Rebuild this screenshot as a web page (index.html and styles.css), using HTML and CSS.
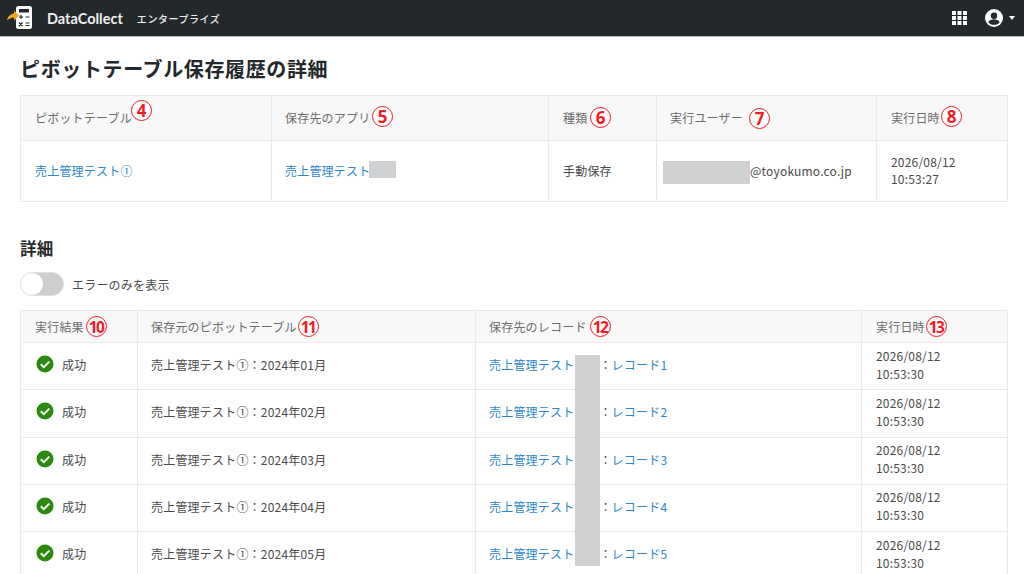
FILE: index.html
```html
<!DOCTYPE html>
<html lang="ja">
<head>
<meta charset="utf-8">
<title>ピボットテーブル保存履歴の詳細</title>
<link rel="stylesheet" href="styles.css">
</head>
<body>
<header class="topbar">
  <div class="brand">
    <svg class="logo" width="36" height="32" viewBox="0 0 36 32">
      <rect x="16" y="4" width="16" height="23" rx="2.5" fill="#fff"/>
      <rect x="19" y="7" width="10" height="3.5" fill="#23282a"/>
      <g stroke="#23282a" stroke-width="1.2" fill="none">
        <path d="M19 15h4M21 13v4M25.5 15h4M19 20.5l3.5 3.5M22.5 20.5L19 24M25.5 21h4M25.5 23.5h4"/>
      </g>
      <path d="M7 18.5c.6-3.600 3-6.500 7-7V8.500l5 5.200-5 5v-3.200c-3 .2-5 1.300-7 3z" fill="#f0a81e"/>
    </svg>
    <span class="brand-name">DataCollect</span>
    <span class="brand-plan">エンタープライズ</span>
  </div>
  <div class="top-actions">
    <svg class="grid-icon" width="15" height="14" viewBox="0 0 15 14" fill="#fff">
      <rect x="0" y="0" width="4" height="4"/><rect x="5.500" y="0" width="4" height="4"/><rect x="11" y="0" width="4" height="4"/>
      <rect x="0" y="5" width="4" height="4"/><rect x="5.500" y="5" width="4" height="4"/><rect x="11" y="5" width="4" height="4"/>
      <rect x="0" y="10" width="4" height="4"/><rect x="5.500" y="10" width="4" height="4"/><rect x="11" y="10" width="4" height="4"/>
    </svg>
    <svg class="user-icon" width="18" height="18" viewBox="0 0 18 18">
      <circle cx="9" cy="9" r="9" fill="#fff"/>
      <circle cx="9" cy="6.700" r="3.200" fill="#23282a"/>
      <path d="M3.300 13.200c1-2 3.300-2.900 5.700-2.900s4.700.9 5.700 2.900C13.500 14.800 11.400 15.800 9 15.800s-4.500-1-5.700-2.600z" fill="#23282a"/>
    </svg>
    <span class="caret"></span>
  </div>
</header>

<main class="page">
  <h1 class="title">ピボットテーブル保存履歴の詳細</h1>

  <table class="table summary">
    <colgroup>
      <col class="s1"><col class="s2"><col class="s3"><col class="s4"><col class="s5">
    </colgroup>
    <thead>
      <tr>
        <th>ピボットテーブル<span class="mark m4">4</span></th>
        <th>保存先のアプリ<span class="mark m5">5</span></th>
        <th class="wide">種類<span class="mark m6">6</span></th>
        <th>実行ユーザー<span class="mark m7">7</span></th>
        <th class="wide">実行日時<span class="mark m8">8</span></th>
      </tr>
    </thead>
    <tbody>
      <tr>
        <td><a href="#">売上管理テスト①</a></td>
        <td><a href="#">売上管理テスト</a><span class="redact r-app"></span></td>
        <td class="wide">手動保存</td>
        <td class="mail">@toyokumo.co.jp<span class="redact r-mail"></span></td>
        <td class="wide">2026/08/12<br>10:53:27</td>
      </tr>
    </tbody>
  </table>

  <h2 class="subtitle">詳細</h2>

  <div class="filter">
    <span class="toggle"><span class="knob"></span></span>
    <span class="filter-label">エラーのみを表示</span>
  </div>

  <table class="table detail">
    <colgroup>
      <col class="d1"><col class="d2"><col class="d3"><col class="d4">
    </colgroup>
    <thead>
      <tr>
        <th>実行結果<span class="mark two m10">10</span></th>
        <th>保存元のピボットテーブル<span class="mark two m11">11</span></th>
        <th>保存先のレコード<span class="mark two m12">12</span></th>
        <th class="wide">実行日時<span class="mark two m13">13</span></th>
      </tr>
    </thead>
    <tbody>
      <tr>
        <td><span class="status"><svg class="ok" viewBox="0 0 18 18"><circle cx="9" cy="9" r="8.500" fill="#2a8a0e"/><path d="M4.800 9.300l3 2.900 5.500-5.600" fill="none" stroke="#fff" stroke-width="2"/></svg>成功</span></td>
        <td>売上管理テスト①：2024年01月</td>
        <td><a href="#">売上管理テスト</a><span class="gap">：</span><a href="#">レコード1</a><span class="redact r-rec"></span></td>
        <td class="date wide">2026/08/12<br>10:53:30</td>
      </tr>
      <tr>
        <td><span class="status"><svg class="ok" viewBox="0 0 18 18"><circle cx="9" cy="9" r="8.500" fill="#2a8a0e"/><path d="M4.800 9.300l3 2.900 5.500-5.600" fill="none" stroke="#fff" stroke-width="2"/></svg>成功</span></td>
        <td>売上管理テスト①：2024年02月</td>
        <td><a href="#">売上管理テスト</a><span class="gap">：</span><a href="#">レコード2</a></td>
        <td class="date wide">2026/08/12<br>10:53:30</td>
      </tr>
      <tr>
        <td><span class="status"><svg class="ok" viewBox="0 0 18 18"><circle cx="9" cy="9" r="8.500" fill="#2a8a0e"/><path d="M4.800 9.300l3 2.900 5.500-5.600" fill="none" stroke="#fff" stroke-width="2"/></svg>成功</span></td>
        <td>売上管理テスト①：2024年03月</td>
        <td><a href="#">売上管理テスト</a><span class="gap">：</span><a href="#">レコード3</a></td>
        <td class="date wide">2026/08/12<br>10:53:30</td>
      </tr>
      <tr>
        <td><span class="status"><svg class="ok" viewBox="0 0 18 18"><circle cx="9" cy="9" r="8.500" fill="#2a8a0e"/><path d="M4.800 9.300l3 2.900 5.500-5.600" fill="none" stroke="#fff" stroke-width="2"/></svg>成功</span></td>
        <td>売上管理テスト①：2024年04月</td>
        <td><a href="#">売上管理テスト</a><span class="gap">：</span><a href="#">レコード4</a></td>
        <td class="date wide">2026/08/12<br>10:53:30</td>
      </tr>
      <tr>
        <td><span class="status"><svg class="ok" viewBox="0 0 18 18"><circle cx="9" cy="9" r="8.500" fill="#2a8a0e"/><path d="M4.800 9.300l3 2.900 5.500-5.600" fill="none" stroke="#fff" stroke-width="2"/></svg>成功</span></td>
        <td>売上管理テスト①：2024年05月</td>
        <td><a href="#">売上管理テスト</a><span class="gap">：</span><a href="#">レコード5</a></td>
        <td class="date wide">2026/08/12<br>10:53:30</td>
      </tr>
    </tbody>
  </table>
</main>
</body>
</html>
```

FILE: styles.css
```css
* { box-sizing: border-box; }
html, body { margin: 0; height: 574px; overflow: hidden; background: #fff; }
body {
  font-family: "Noto Sans CJK JP", "Noto Sans", sans-serif;
  font-size: 12px;
  color: #4a4a4a;
  letter-spacing: .2px;
}

.topbar {
  height: 37px;
  background: #23282a;
  border-bottom: 1px solid #b9bcbd;
  display: flex;
  align-items: center;
  justify-content: space-between;
  padding-right: 9px;
  color: #fff;
}
.brand { display: flex; align-items: center; }
.brand-name {
  font-family: "Lato", sans-serif;
  font-weight: 700;
  font-size: 14.500px;
  letter-spacing: 0;
  margin-left: 11px;
  color: #eee;
}
.brand-plan { font-size: 10px; font-weight: 500; letter-spacing: .55px; margin-left: 14px; color: #eee; }
.top-actions { display: flex; align-items: center; }
.user-icon { margin-left: 18px; }
.caret {
  margin-left: 6px;
  border-left: 3.500px solid transparent;
  border-right: 3.500px solid transparent;
  border-top: 4px solid #fff;
}

.page { padding: 0 16px 0 20px; }
.title {
  margin: 19px 0 0;
  height: 39px;
  font-size: 20px;
  line-height: 26px;
  font-weight: 700;
  letter-spacing: .63px;
  color: #23282a;
}
.table {
  width: 988px;
  border-collapse: separate;
  border-spacing: 0;
  table-layout: fixed;
}
.table th, .table td {
  border-right: 1px solid #e8eaea;
  border-bottom: 1px solid #e8eaea;
  padding: 0 13px;
  text-align: left;
  font-weight: 400;
  position: relative;
}
.table th { background: #f8f8f8; color: #6c6c6c; border-top: 1px solid #e8eaea; }
.table th:first-child, .table td:first-child { border-left: 1px solid #e8eaea; padding-left: 14px; }
.table .wide { padding-left: 14px; }
.table td { line-height: 18px; }
.table a { color: #2b86cc; text-decoration: none; }

.summary thead tr { height: 46px; }
.summary tbody tr { height: 61px; }
.summary th, .summary td { padding-bottom: 2px; }
.s1 { width: 252px; } .s2 { width: 277px; } .s3 { width: 108px; } .s4 { width: 220px; } .s5 { width: 131px; }
.summary td { line-height: 17px; }
.summary td.mail { padding-left: 93px; }

.subtitle {
  margin: 35px 0 0;
  font-size: 16.500px;
  line-height: 22px;
  font-weight: 700;
  color: #23282a;
}
.filter { display: flex; align-items: center; margin-top: 13px; height: 24px; }
.toggle {
  width: 44px;
  height: 24px;
  border-radius: 12px;
  background: #cdcdcd;
  border: 1px solid #e2e2e2;
  display: block;
}
.knob {
  display: block;
  width: 22px;
  height: 22px;
  border-radius: 50%;
  background: #fff;
}
.filter-label { margin-left: 8px; color: #4a4a4a; }

.detail { margin-top: 14px; }
.detail thead tr { height: 33px; }
.detail tbody tr { height: 47.250px; }
.d1 { width: 118px; } .d2 { width: 338px; } .d3 { width: 386px; } .d4 { width: 146px; }
.detail td { padding-bottom: 2px; }
.detail td.date { padding-bottom: 3px; }

.status { display: flex; align-items: center; }
.ok { width: 18px; height: 18px; margin-right: 8px; margin-left: 1px; flex: none; position: relative; top: -1px; }

.gap { margin-left: 25px; color: #4a4a4a; }

.mark {
  position: absolute;
  width: 21px;
  height: 21px;
  border: 1.500px solid #f01c24;
  border-radius: 50%;
  background: #fff;
  display: flex;
  align-items: center;
  justify-content: center;
  font-family: "Noto Sans", sans-serif;
  font-size: 17px;
  font-weight: 700;
  letter-spacing: 0;
  line-height: 18px;
  color: #f01c24;
}
.mark.two { font-size: 15.500px; letter-spacing: -1.500px; padding-right: 1px; }
.m4 { left: 110px; top: 4px; }
.m5 { left: 100px; top: 10px; }
.m6 { left: 41px; top: 11px; }
.m7 { left: 92px; top: 12px; }
.m8 { left: 64px; top: 10px; }
.m10 { left: 65px; top: 5px; }
.m11 { left: 160px; top: 5px; }
.m12 { left: 114px; top: 5px; }
.m13 { left: 64px; top: 5px; }

.redact { position: absolute; background: #cfd0d1; display: block; }
.r-app { left: 97px; top: 20px; width: 27px; height: 17px; }
.r-mail { left: 6px; top: 20px; width: 87px; height: 23px; }
.r-rec { left: 99px; top: 12px; width: 25px; height: 211px; z-index: 2; }
```
